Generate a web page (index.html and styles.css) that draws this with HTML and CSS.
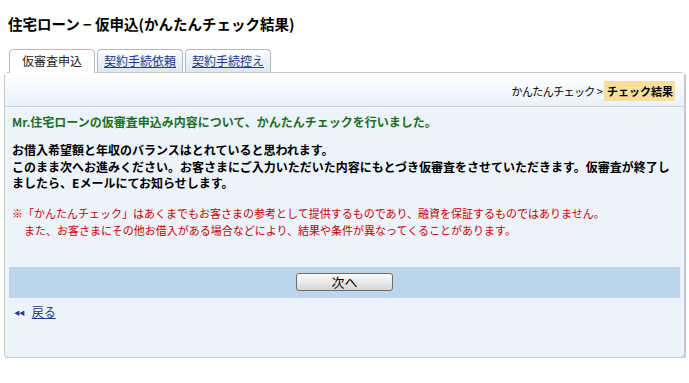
FILE: index.html
```html
<!DOCTYPE html>
<html lang="ja">
<head>
    <meta charset="UTF-8">
    <title>住宅ローン - 仮申込(かんたんチェック結果)</title>
    <link rel="stylesheet" href="styles.css">
</head>
<body>
    <h1 class="page-title">住宅ローン &minus; 仮申込(かんたんチェック結果)</h1>

    <div class="tabs">
        <span class="tab active">仮審査申込</span>
        <span class="tab"><a href="#">契約手続依頼</a></span>
        <span class="tab"><a href="#">契約手続控え</a></span>
    </div>

    <div class="panel">
        <div class="inner">
            <div class="crumbs">
                かんたんチェック &gt; <span class="current">チェック結果</span>
            </div>

            <div class="content">
                <p class="lead">Mr.住宅ローンの仮審査申込み内容について、かんたんチェックを行いました。</p>

                <p class="result">お借入希望額と年収のバランスはとれていると思われます。<br>このまま次へお進みください。お客さまにご入力いただいた内容にもとづき仮審査をさせていただきます。仮審査が終了しましたら、Eメールにてお知らせします。</p>

                <p class="notice">※「かんたんチェック」はあくまでもお客さまの参考として提供するものであり、融資を保証するものではありません。<br><span class="indent">また、お客さまにその他お借入がある場合などにより、結果や条件が異なってくることがあります。</span></p>
            </div>

            <div class="actions">
                <button type="button" class="btn-next">次へ</button>
            </div>

            <div class="back">
                <span class="arrows">&#9664;&#9664;</span>
                <a href="#">戻る</a>
            </div>
        </div>
    </div>
</body>
</html>
```

FILE: styles.css
```css
body {
    margin: 0;
    font-family: "Noto Sans CJK JP", "DejaVu Sans", sans-serif;
    font-size: 12px;
    color: #000;
    background: #fff;
}

.page-title {
    margin: 0;
    padding: 15px 0 0 8px;
    font-size: 14.5px;
    line-height: 18px;
    font-weight: bold;
}

.tabs {
    display: flex;
    gap: 2px;
    margin: 16px 0 0 9px;
    height: 23px;
    position: relative;
    z-index: 1;
}

.tab {
    box-sizing: border-box;
    width: 86px;
    height: 23px;
    border: 1px solid #b4b9c0;
    border-bottom: none;
    border-radius: 4px 4px 0 0;
    background: linear-gradient(#ffffff, #dde6f1);
    text-align: center;
    line-height: 22px;
}

.tab a {
    color: #1b3b8c;
    text-decoration: underline;
}

.tab.active {
    height: 24px;
    background: #fff;
    border-top-color: #e6aeb0;
    color: #222;
}

.panel {
    box-sizing: border-box;
    margin: 0 4px 0 4px;
    width: 681px;
    height: 286px;
    border: 1px solid #c4c8cc;
    border-radius: 4px;
    background: #edf3fb;
    box-shadow: 1px 1px 1px #c0c4c8;
}

.inner {
    margin: 0 4px;
}

.crumbs {
    height: 33px;
    border-bottom: 1px solid #cbd0d6;
    margin: 0 -4px;
    padding: 0 9px 0 0;
    background: linear-gradient(#ffffff, #eaf1fa);
    text-align: right;
    line-height: 37px;
    font-size: 11px;
    letter-spacing: -0.6px;
}

.crumbs .current {
    background: #f7df9e;
    font-weight: bold;
    letter-spacing: 0;
    padding: 2px 2px 2px 3px;
}

.content {
    padding: 6px 3px 0 3px;
}

.content p {
    margin: 0;
}

.lead {
    color: #1f6e1f;
    font-weight: bold;
    line-height: 17px;
}

.result {
    padding-top: 12px;
    font-weight: bold;
    line-height: 16.5px;
}

.notice {
    padding-top: 13px;
    color: #c80000;
    font-size: 11px;
    line-height: 17px;
}

.notice .indent {
    padding-left: 12px;
}

.actions {
    margin-top: 28px;
    height: 31px;
    background: #bcd5ea;
    display: flex;
    justify-content: center;
    align-items: center;
}

.btn-next {
    width: 97px;
    height: 18px;
    padding: 0;
    border: 1px solid #6d6d6d;
    border-radius: 3px;
    background: linear-gradient(#fbfbfb, #d6d6d6);
    font-family: "Noto Sans CJK JP", sans-serif;
    font-size: 13px;
    line-height: 16px;
    color: #000;
    cursor: pointer;
}

.back {
    padding: 6px 0 0 5px;
    line-height: 16px;
}

.back .arrows {
    color: #1b3b8c;
    font-size: 6px;
    letter-spacing: -1px;
    vertical-align: 2px;
    margin-right: 5px;
}

.back a {
    color: #1b3b8c;
    text-decoration: underline;
}
```
